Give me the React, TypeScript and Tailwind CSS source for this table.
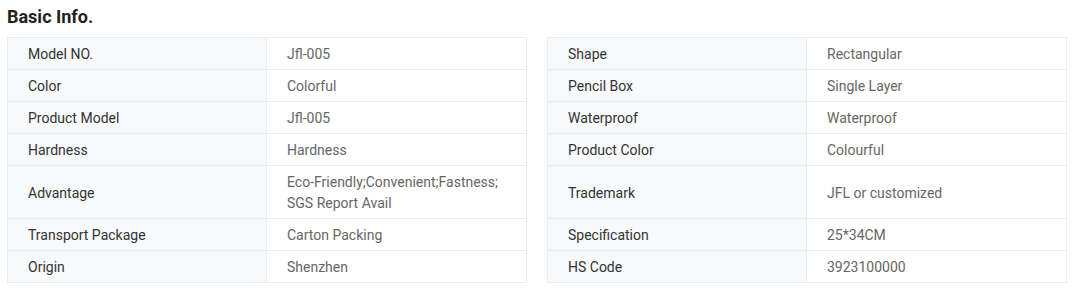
import React from "react";

const left: [string, string][] = [
  ["Model NO.", "Jfl-005"],
  ["Color", "Colorful"],
  ["Product Model", "Jfl-005"],
  ["Hardness", "Hardness"],
  ["Advantage", "Eco-Friendly;Convenient;Fastness; SGS Report Avail"],
  ["Transport Package", "Carton Packing"],
  ["Origin", "Shenzhen"],
];
const right: [string, string][] = [
  ["Shape", "Rectangular"],
  ["Pencil Box", "Single Layer"],
  ["Waterproof", "Waterproof"],
  ["Product Color", "Colourful"],
  ["Trademark", "JFL or customized"],
  ["Specification", "25*34CM"],
  ["HS Code", "3923100000"],
];

function Half({ pair, first }: { pair: [string, string]; first: boolean }) {
  return (
    <div className={`flex-1 flex border-x border-b border-[#e8ecf1] ${first ? "border-t" : ""}`}>
      <div className="w-1/2 flex items-center bg-[#f8f9fb] px-5 pt-[6px] pb-[4px] text-[#333] border-r border-[#e8ecf1]">
        {pair[0]}
      </div>
      <div className="w-1/2 flex items-center bg-white px-5 pt-[6px] pb-[4px] text-[#666]">
        {pair[1]}
      </div>
    </div>
  );
}

export default function App() {
  return (
    <div className="bg-white w-[1078px] h-[300px] pl-[7px] pr-[11px] pt-[4px]" style={{ fontFamily: "Roboto, 'Liberation Sans', sans-serif" }}>
      <h2 className="text-[18px] leading-[26px] font-bold text-[#222] mb-[7px]">Basic Info.</h2>
      <div className="flex flex-col text-[14px] leading-[21px]">
        {left.map((l, i) => (
          <div key={i} className="flex gap-5">
            <Half pair={l} first={i === 0} />
            <Half pair={right[i]} first={i === 0} />
          </div>
        ))}
      </div>
    </div>
  );
}
